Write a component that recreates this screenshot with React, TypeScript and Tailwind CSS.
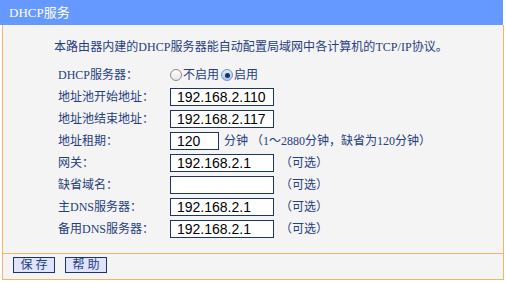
import React from 'react'

const font = { fontFamily: '"Liberation Serif", "Noto Sans CJK SC", serif' }

function Field({ value, width = 'w-[104px]' }: { value: string; width?: string }) {
  return (
    <div
      className={`${width} h-[18px] border-[1.5px] border-[#1c3468] bg-white pl-[6px] flex items-center text-[14px] leading-none text-black`}
      style={{ fontFamily: '"Liberation Sans", Arial, sans-serif' }}
    >
      {value}
    </div>
  )
}

function Radio({ checked }: { checked?: boolean }) {
  return checked ? (
    <span className="w-[12px] h-[12px] rounded-full border border-[#6f95c8] bg-gradient-to-b from-[#dbe9fb] to-[#a9c8ef] flex items-center justify-center">
      <span className="w-[5px] h-[5px] rounded-full bg-[#1e2f5a]" />
    </span>
  ) : (
    <span className="w-[12px] h-[12px] rounded-full border border-[#8a8a8a] bg-gradient-to-b from-white to-[#e4e4e4]" />
  )
}

function Row({ label, children }: { label: string; children: React.ReactNode }) {
  return (
    <div className="flex items-center h-[22px]">
      <div className="w-[112px] shrink-0">{label}</div>
      <div className="flex items-center">{children}</div>
    </div>
  )
}

const optional = <span className="ml-[6px]">（可选）</span>

export default function App() {
  return (
    <div className="w-[506px] h-[283px] bg-white text-[12px] text-[#263d80]" style={font}>
      <div className="w-[503px] h-[25px] bg-[#6699ff] text-white text-[13px] flex items-center pl-[9px]">
        DHCP服务
      </div>
      <div className="ml-[2px] w-[502px] border-x border-b border-[#f2b46c] bg-[#f4f4f4]">
        <div className="pl-[51px] pt-[13px] h-[39px] tracking-[0.05px]">本路由器内建的DHCP服务器能自动配置局域网中各计算机的TCP/IP协议。</div>
        <div className="pl-[55px] pb-[13px]">
          <Row label="DHCP服务器：">
            <Radio />
            <span className="ml-[1px] mr-[2px]">不启用</span>
            <Radio checked />
            <span className="ml-[1px]">启用</span>
          </Row>
          <Row label="地址池开始地址：">
            <Field value="192.168.2.110" />
          </Row>
          <Row label="地址池结束地址：">
            <Field value="192.168.2.117" />
          </Row>
          <Row label="地址租期：">
            <Field value="120" width="w-[49px]" />
            <span className="ml-[5px]">分钟 （1～2880分钟，缺省为120分钟）</span>
          </Row>
          <Row label="网关：">
            <Field value="192.168.2.1" />
            {optional}
          </Row>
          <Row label="缺省域名：">
            <Field value="" />
            {optional}
          </Row>
          <Row label="主DNS服务器：">
            <Field value="192.168.2.1" />
            {optional}
          </Row>
          <Row label="备用DNS服务器：">
            <Field value="192.168.2.1" />
            {optional}
          </Row>
        </div>
        <div className="border-t border-[#f2b46c] h-[26px] flex items-start pt-[3px] gap-[10px] pl-[10px]">
          <button className="w-[42px] h-[16px] border-[1.5px] border-[#1c3468] bg-[#dfe3fb] text-[12px] leading-none text-[#263d80]">
            保 存
          </button>
          <button className="w-[42px] h-[16px] border-[1.5px] border-[#1c3468] bg-[#dfe3fb] text-[12px] leading-none text-[#263d80]">
            帮 助
          </button>
        </div>
      </div>
    </div>
  )
}
